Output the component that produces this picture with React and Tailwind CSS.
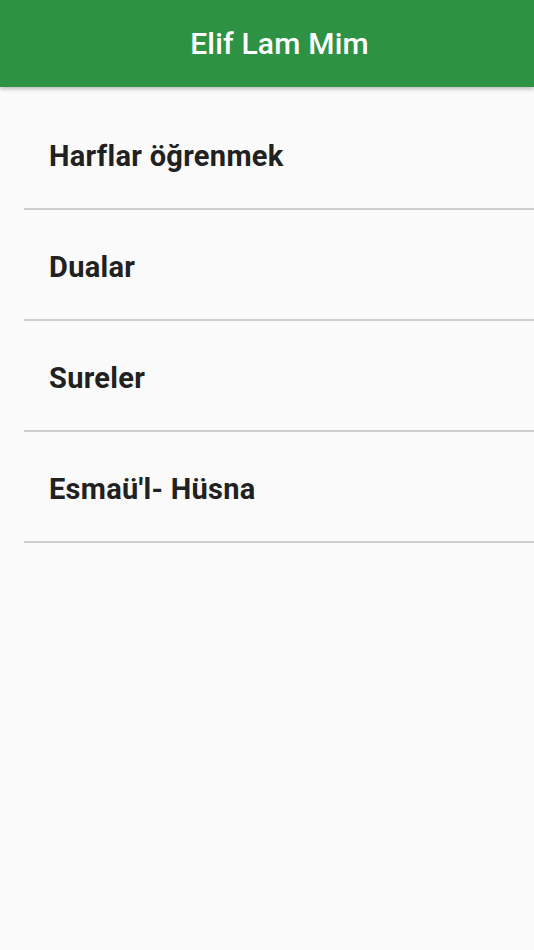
import React from 'react';

const ITEMS = ['Harflar öğrenmek', 'Dualar', 'Sureler', "Esmaü'l- Hüsna"];

export default function App() {
    return (
        <div className="min-h-[950px] bg-[#fafafa] font-['Roboto','Liberation_Sans',sans-serif]">
            <header className="relative z-10 h-[87px] bg-[#2e9244] flex items-center justify-center pl-[25px] shadow-[0_2px_4px_rgba(0,0,0,0.25)]">
                <h1 className="text-white text-[30px] font-medium tracking-[0.2px]">Elif Lam Mim</h1>
            </header>

            <ul className="pt-[12px] pl-[24px]">
                {ITEMS.map((item) => (
                    <li
                        key={item}
                        className="h-[111px] flex items-center pl-[25px] pt-[6px] border-b-2 border-[#cdcdcd] text-[29px] font-bold tracking-[0.3px] text-[#212121]"
                    >
                        {item}
                    </li>
                ))}
            </ul>
        </div>
    );
}
